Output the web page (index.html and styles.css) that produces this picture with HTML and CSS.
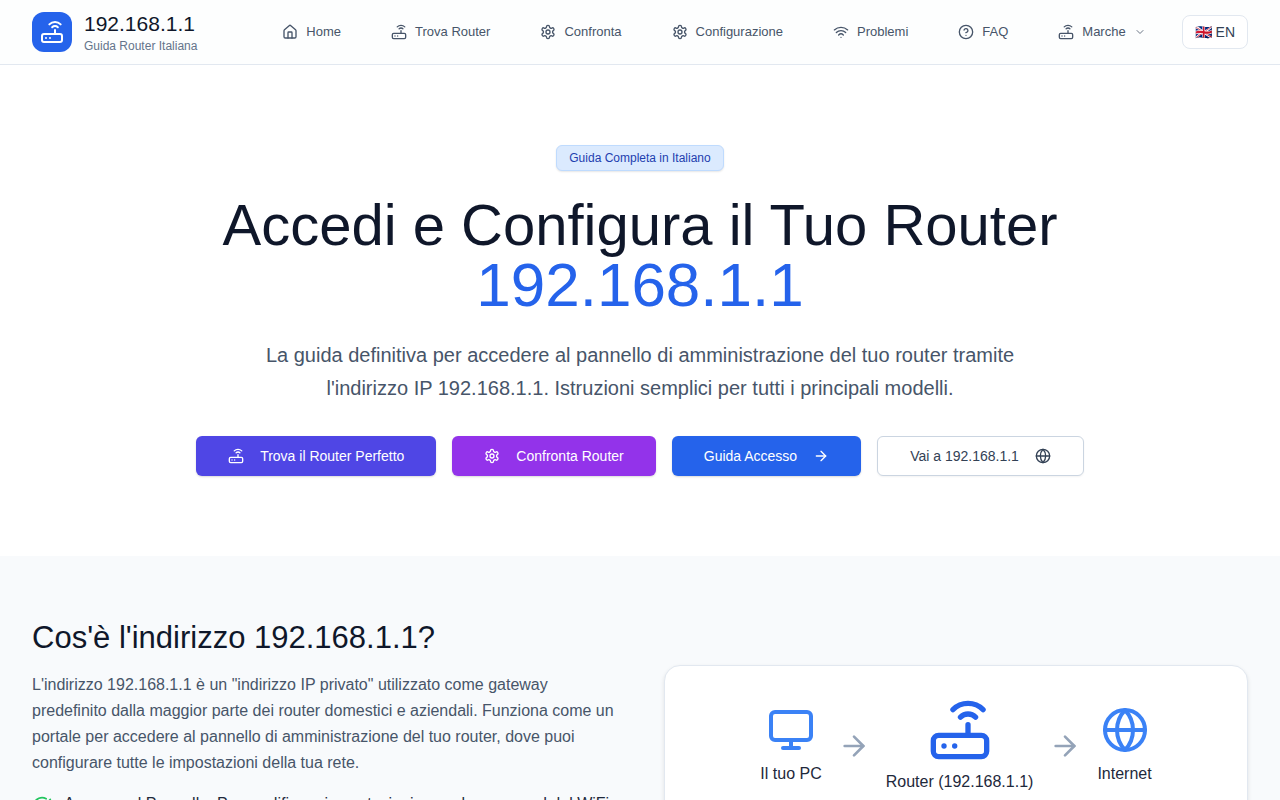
FILE: index.html
```
<!DOCTYPE html>
<html lang="it">
<head>
  <meta charset="UTF-8">
  <meta name="viewport" content="width=device-width, initial-scale=1.0">
  <title>192.168.1.1 - Guida Router Italiana</title>
  <link rel="stylesheet" href="styles.css">
</head>
<body>

  <!-- icone -->
  <svg class="sprite" aria-hidden="true">
    <symbol id="i-router" viewBox="0 0 24 24"><rect width="20" height="8" x="2" y="14" rx="2"/><path d="M6.01 18H6"/><path d="M10.01 18H10"/><path d="M15 10v4"/><path d="M17.84 7.17a4 4 0 0 0-5.66 0"/><path d="M20.66 4.34a8 8 0 0 0-11.31 0"/></symbol>
    <symbol id="i-home" viewBox="0 0 24 24"><path d="M15 21v-8a1 1 0 0 0-1-1h-4a1 1 0 0 0-1 1v8"/><path d="M3 10a2 2 0 0 1 .709-1.528l7-5.999a2 2 0 0 1 2.582 0l7 5.999A2 2 0 0 1 21 10v9a2 2 0 0 1-2 2H5a2 2 0 0 1-2-2z"/></symbol>
    <symbol id="i-settings" viewBox="0 0 24 24"><path d="M12.22 2h-.44a2 2 0 0 0-2 2v.18a2 2 0 0 1-1 1.73l-.43.25a2 2 0 0 1-2 0l-.15-.08a2 2 0 0 0-2.73.73l-.22.38a2 2 0 0 0 .73 2.73l.15.1a2 2 0 0 1 1 1.72v.51a2 2 0 0 1-1 1.74l-.15.09a2 2 0 0 0-.73 2.73l.22.38a2 2 0 0 0 2.73.73l.15-.08a2 2 0 0 1 2 0l.43.25a2 2 0 0 1 1 1.73V20a2 2 0 0 0 2 2h.44a2 2 0 0 0 2-2v-.18a2 2 0 0 1 1-1.73l.43-.25a2 2 0 0 1 2 0l.15.08a2 2 0 0 0 2.73-.73l.22-.39a2 2 0 0 0-.73-2.73l-.15-.08a2 2 0 0 1-1-1.74v-.5a2 2 0 0 1 1-1.74l.15-.09a2 2 0 0 0 .73-2.73l-.22-.38a2 2 0 0 0-2.73-.73l-.15.08a2 2 0 0 1-2 0l-.43-.25a2 2 0 0 1-1-1.73V4a2 2 0 0 0-2-2z"/><circle cx="12" cy="12" r="3"/></symbol>
    <symbol id="i-wifi" viewBox="0 0 24 24"><path d="M12 20h.01"/><path d="M2 8.82a15 15 0 0 1 20 0"/><path d="M5 12.859a10 10 0 0 1 14 0"/><path d="M8.5 16.429a5 5 0 0 1 7 0"/></symbol>
    <symbol id="i-help" viewBox="0 0 24 24"><circle cx="12" cy="12" r="10"/><path d="M9.09 9a3 3 0 0 1 5.83 1c0 2-3 3-3 3"/><path d="M12 17h.01"/></symbol>
    <symbol id="i-chevron" viewBox="0 0 24 24"><path d="m6 9 6 6 6-6"/></symbol>
    <symbol id="i-arrow" viewBox="0 0 24 24"><path d="M5 12h14"/><path d="m12 5 7 7-7 7"/></symbol>
    <symbol id="i-globe" viewBox="0 0 24 24"><circle cx="12" cy="12" r="10"/><path d="M12 2a14.5 14.5 0 0 0 0 20 14.5 14.5 0 0 0 0-20"/><path d="M2 12h20"/></symbol>
    <symbol id="i-monitor" viewBox="0 0 24 24"><rect width="20" height="14" x="2" y="3" rx="2"/><path d="M8 21h8"/><path d="M12 17v4"/></symbol>
    <symbol id="i-check" viewBox="0 0 24 24"><path d="M21.801 10A10 10 0 1 1 17 3.335"/><path d="m9 11 3 3L22 4"/></symbol>
  </svg>

  <header class="header">
    <a class="brand" href="#">
      <span class="brand-logo"><svg class="icon icon-md"><use href="#i-router"/></svg></span>
      <span class="brand-text">
        <span class="brand-name">192.168.1.1</span>
        <span class="brand-sub">Guida Router Italiana</span>
      </span>
    </a>
    <nav class="nav">
      <a class="nav-link" href="#"><svg class="icon"><use href="#i-home"/></svg>Home</a>
      <a class="nav-link" href="#"><svg class="icon"><use href="#i-router"/></svg>Trova Router</a>
      <a class="nav-link" href="#"><svg class="icon"><use href="#i-settings"/></svg>Confronta</a>
      <a class="nav-link" href="#"><svg class="icon"><use href="#i-settings"/></svg>Configurazione</a>
      <a class="nav-link" href="#"><svg class="icon"><use href="#i-wifi"/></svg>Problemi</a>
      <a class="nav-link" href="#"><svg class="icon"><use href="#i-help"/></svg>FAQ</a>
      <button class="nav-link" type="button"><svg class="icon"><use href="#i-router"/></svg>Marche<svg class="icon icon-xs"><use href="#i-chevron"/></svg></button>
    </nav>
    <a class="lang" href="#">🇬🇧 EN</a>
  </header>

  <main>
    <section class="hero">
      <span class="badge">Guida Completa in Italiano</span>
      <h1>Accedi e Configura il Tuo Router <span class="ip">192.168.1.1</span></h1>
      <p class="lead">La guida definitiva per accedere al pannello di amministrazione del tuo router tramite l'indirizzo IP 192.168.1.1. Istruzioni semplici per tutti i principali modelli.</p>
      <div class="actions">
        <a class="btn btn-indigo" href="#"><svg class="icon"><use href="#i-router"/></svg>Trova il Router Perfetto</a>
        <a class="btn btn-purple" href="#"><svg class="icon"><use href="#i-settings"/></svg>Confronta Router</a>
        <a class="btn btn-blue" href="#">Guida Accesso<svg class="icon"><use href="#i-arrow"/></svg></a>
        <a class="btn btn-outline" href="#">Vai a 192.168.1.1<svg class="icon"><use href="#i-globe"/></svg></a>
      </div>
    </section>

    <section class="about">
      <div class="about-text">
        <h2>Cos'è l'indirizzo 192.168.1.1?</h2>
        <p>L'indirizzo 192.168.1.1 è un "indirizzo IP privato" utilizzato come gateway predefinito dalla maggior parte dei router domestici e aziendali. Funziona come un portale per accedere al pannello di amministrazione del tuo router, dove puoi configurare tutte le impostazioni della tua rete.</p>
        <ul class="features">
          <li><svg class="icon icon-sm"><use href="#i-check"/></svg><span>Accesso al Pannello: Per modificare impostazioni come la password del WiFi.</span></li>
        </ul>
      </div>
      <div class="card">
        <div class="node">
          <svg class="icon icon-lg"><use href="#i-monitor"/></svg>
          <span>Il tuo PC</span>
        </div>
        <svg class="icon icon-arrow"><use href="#i-arrow"/></svg>
        <div class="node">
          <svg class="icon icon-xl"><use href="#i-router"/></svg>
          <span>Router (192.168.1.1)</span>
        </div>
        <svg class="icon icon-arrow"><use href="#i-arrow"/></svg>
        <div class="node">
          <svg class="icon icon-lg"><use href="#i-globe"/></svg>
          <span>Internet</span>
        </div>
      </div>
    </section>
  </main>

</body>
</html>
```
FILE: styles.css
```
* {
  box-sizing: border-box;
}

body {
  margin: 0;
  font-family: "Liberation Sans", Arial, sans-serif;
  font-size: 16px;
  line-height: 24px;
  color: #0f172a;
  background: white;
}

h1, h2, p, ul {
  margin: 0;
  padding: 0;
  font-weight: normal;
}

a {
  color: inherit;
  text-decoration: none;
}

.sprite {
  display: none;
}

/* icone */
.icon {
  width: 16px;
  height: 16px;
  flex-shrink: 0;
  fill: none;
  stroke: currentColor;
  stroke-width: 2;
  stroke-linecap: round;
  stroke-linejoin: round;
}

.icon-xs {
  width: 12px;
  height: 12px;
  opacity: 0.8;
}

.icon-sm {
  width: 20px;
  height: 20px;
}

.icon-md {
  width: 24px;
  height: 24px;
}

.icon-lg {
  width: 48px;
  height: 48px;
  color: #3b82f6;
}

.icon-xl {
  width: 64px;
  height: 64px;
  color: #2563eb;
}

.icon-arrow {
  width: 32px;
  height: 32px;
  color: #94a3b8;
}

/* header */
.header {
  display: flex;
  align-items: center;
  height: 65px;
  padding: 0 32px;
  border-bottom: 1px solid #e2e8f0;
  background: #fdfefe;
}

.brand {
  display: flex;
  align-items: center;
  gap: 12px;
}

.brand-logo {
  display: flex;
  align-items: center;
  justify-content: center;
  width: 40px;
  height: 40px;
  border-radius: 12px;
  background: #2563eb;
  color: white;
}

.brand-text {
  display: flex;
  flex-direction: column;
  white-space: nowrap;
}

.brand-name {
  font-size: 21px;
  line-height: 28px;
}

.brand-sub {
  font-size: 12px;
  line-height: 16px;
  color: #64748b;
}

.nav {
  display: flex;
  gap: 18px;
  margin-left: auto;
  margin-right: 20px;
}

.nav-link {
  display: flex;
  align-items: center;
  gap: 8px;
  padding: 8px 16px;
  border: none;
  background: none;
  font-family: inherit;
  font-size: 13px;
  line-height: 20px;
  color: #475569;
  white-space: nowrap;
  cursor: pointer;
}

.lang {
  padding: 6px 12px;
  border: 1px solid #e2e8f0;
  border-radius: 8px;
  background: white;
  font-size: 14px;
  line-height: 20px;
  color: #334155;
  white-space: nowrap;
}

/* hero */
.hero {
  display: flex;
  flex-direction: column;
  align-items: center;
  padding: 80px 32px;
  text-align: center;
}

.badge {
  padding: 4px 12px;
  border: 1px solid #bfdbfe;
  border-radius: 6px;
  background: #dbeafe;
  font-size: 12px;
  line-height: 16px;
  color: #1e40af;
  box-shadow: 0 1px 2px rgba(0, 0, 0, 0.1);
}

h1 {
  max-width: 896px;
  margin: 24px 0;
  font-size: 58px;
  line-height: 60px;
}

.ip {
  display: block;
  font-size: 62px;
  color: #2563eb;
}

.lead {
  max-width: 768px;
  margin-bottom: 31px;
  font-size: 20px;
  line-height: 33px;
  color: #475569;
}

.actions {
  display: flex;
  flex-wrap: wrap;
  justify-content: center;
  gap: 16px;
}

.btn {
  display: flex;
  align-items: center;
  gap: 16px;
  height: 40px;
  padding: 0 32px;
  border-radius: 6px;
  font-size: 14px;
  line-height: 20px;
  color: white;
  box-shadow: 0 1px 2px rgba(0, 0, 0, 0.15);
}

.btn-indigo {
  background: #4f46e5;
}

.btn-purple {
  background: #9333ea;
}

.btn-blue {
  background: #2563eb;
}

.btn-outline {
  border: 1px solid #cbd5e1;
  background: white;
  color: #334155;
  box-shadow: 0 1px 2px rgba(0, 0, 0, 0.05);
}

/* cos'è */
.about {
  display: grid;
  grid-template-columns: 1fr 1fr;
  align-items: center;
  gap: 48px;
  padding: 64px 32px;
  background: #f8fafc;
}

h2 {
  margin-bottom: 16px;
  font-size: 31px;
  line-height: 36px;
}

.about-text p {
  margin-bottom: 16px;
  line-height: 26px;
  color: #475569;
}

.features {
  margin-bottom: 56px;
  list-style: none;
}

.features li {
  display: flex;
  gap: 12px;
  color: #1e293b;
}

.features .icon {
  margin-top: 4px;
  color: #22c55e;
}

.card {
  display: flex;
  align-items: center;
  justify-content: center;
  gap: 16px;
  padding: 32px;
  border: 1px solid #e2e8f0;
  border-radius: 16px;
  background: white;
  box-shadow: 0 2px 4px rgba(0, 0, 0, 0.1);
}

.node {
  display: flex;
  flex-direction: column;
  align-items: center;
  gap: 8px;
  color: #1e293b;
  white-space: nowrap;
}
```
